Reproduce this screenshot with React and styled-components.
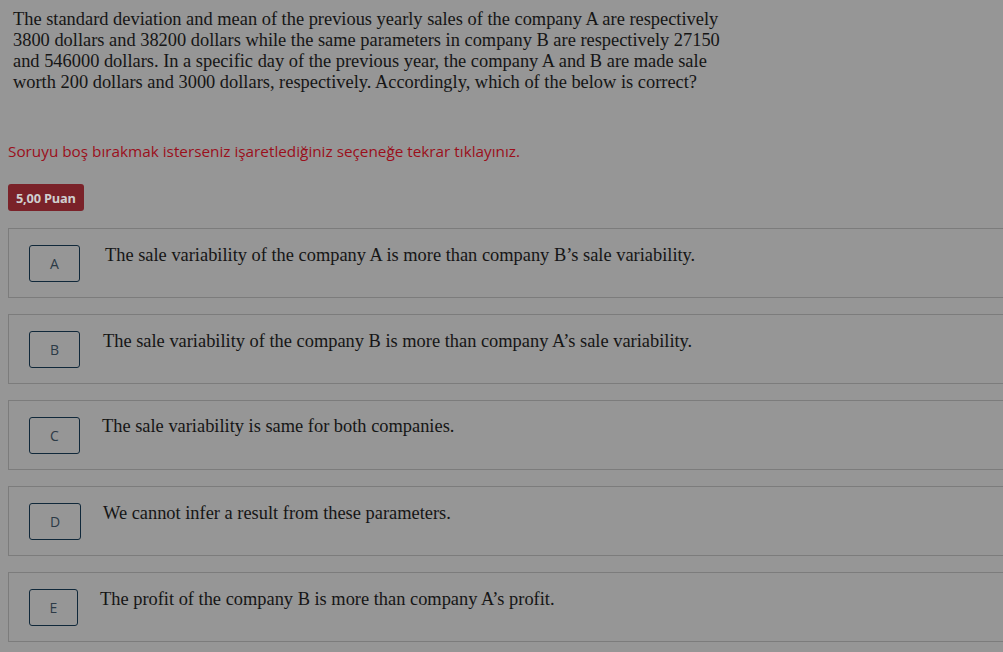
import React from "react";
import styled, { createGlobalStyle } from "styled-components";

const Global = createGlobalStyle`
  html, body { margin: 0; padding: 0; background: #969696; }
  body { width: 1003px; height: 652px; overflow: hidden; }
`;

const Page = styled.div`
  padding: 9px 0 0 8px;
  background: #969696;
  min-height: 652px;
  box-sizing: border-box;
`;

const Question = styled.p`
  margin: 0 0 0 5px;
  font-family: "Liberation Serif", "Times New Roman", serif;
  font-size: 18.4px;
  line-height: 21px;
  color: #151515;
`;

const Hint = styled.p`
  margin: 48px 0 0 0;
  font-family: "Open Sans", "Noto Sans", sans-serif;
  font-size: 15.3px;
  line-height: 20px;
  color: #9b0f1b;
`;

const Badge = styled.span`
  display: inline-flex;
  align-items: center;
  justify-content: center;
  margin-top: 23px;
  height: 27px;
  padding: 0 8px;
  border-radius: 3px;
  background: #7a2229;
  color: #cfcfcf;
  font-family: "Open Sans", "Noto Sans", sans-serif;
  font-weight: 700;
  font-size: 12.8px;
  letter-spacing: -0.2px;
`;

const Options = styled.div`
  display: flex;
  flex-direction: column;
  gap: 16px;
  margin-top: 17px;
  margin-right: -20px;
`;

const Card = styled.div`
  display: flex;
  align-items: flex-start;
  height: 70px;
  box-sizing: border-box;
  border: 1px solid #7c7c7c;
  padding: 16px 0 0 20px;
`;

const LetterBox = styled.div`
  flex: none;
  width: ${(p) => p.$w}px;
  height: 37px;
  box-sizing: border-box;
  border: 1px solid #10283a;
  border-radius: 3px;
  display: flex;
  align-items: center;
  justify-content: center;
  font-family: "Open Sans", "Noto Sans", sans-serif;
  font-size: 14px;
  color: #2c3a46;
`;

const OptionText = styled.div`
  margin-left: ${(p) => p.$gap}px;
  margin-top: ${(p) => p.$top}px;
  font-family: "Liberation Serif", "Times New Roman", serif;
  font-size: 18.4px;
  line-height: 21px;
  color: #151515;
`;

const options = [
  { l: "A", w: 51, gap: 25, top: 0, t: "The sale variability of the company A is more than company B’s sale variability." },
  { l: "B", w: 51, gap: 23, top: 0, t: "The sale variability of the company B is more than company A’s sale variability." },
  { l: "C", w: 51, gap: 22, top: -1, t: "The sale variability is same for both companies." },
  { l: "D", w: 52, gap: 22, top: 0, t: "We cannot infer a result from these parameters." },
  { l: "E", w: 49, gap: 22, top: 0, t: "The profit of the company B is more than company A’s profit." },
];

export default function App() {
  return (
    <>
      <Global />
      <Page>
        <Question>
          The standard deviation and mean of the previous yearly sales of the company A are respectively
          <br />
          3800 dollars and 38200 dollars while the same parameters in company B are respectively 27150
          <br />
          and 546000 dollars. In a specific day of the previous year, the company A and B are made sale
          <br />
          worth 200 dollars and 3000 dollars, respectively. Accordingly, which of the below is correct?
        </Question>
        <Hint>Soruyu boş bırakmak isterseniz işaretlediğiniz seçeneğe tekrar tıklayınız.</Hint>
        <Badge>5,00 Puan</Badge>
        <Options>
          {options.map((o) => (
            <Card key={o.l}>
              <LetterBox $w={o.w}>{o.l}</LetterBox>
              <OptionText $gap={o.gap} $top={o.top}>{o.t}</OptionText>
            </Card>
          ))}
        </Options>
      </Page>
    </>
  );
}
